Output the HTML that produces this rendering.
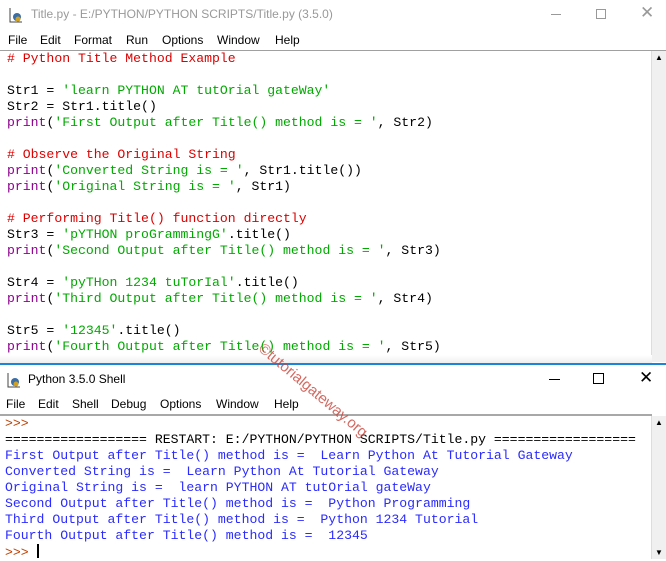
<!DOCTYPE html>
<html><head><meta charset="utf-8"><style>
*{margin:0;padding:0;box-sizing:border-box}
body{width:666px;height:559px;overflow:hidden;background:#fff;font-family:"Liberation Sans",sans-serif;position:relative}
.bar{position:absolute;left:0;width:666px;background:#fff}
.title{font-size:12px;color:#999;}
.menu{font-size:12px;color:#000}
.menu span{position:absolute;top:3px}
pre{font-family:"Liberation Mono",monospace;font-size:13.15px;line-height:16px;position:absolute;left:7px}
.c{color:#dd0000}.s{color:#00aa00}.k{color:#900090}.o{color:#2b2bff}.p{color:#c04000}
.sb{position:absolute;right:0;width:15px;background:#f0f0f0;border-left:1px solid #ddd}
.wm{position:absolute;left:266px;top:340px;transform:rotate(40deg);transform-origin:left top;color:#c8443a;font-size:15px;opacity:.8;white-space:nowrap}
</style></head><body>
<div class="bar title" style="top:0;height:30px">
<svg style="position:absolute;left:8px;top:6px" width="16" height="18"><path d="M2 2v14h12" stroke="#444" fill="none"/><circle cx="9" cy="11" r="4" fill="#3a6ea5"/><circle cx="10" cy="13" r="2.5" fill="#d0a020"/></svg>
<span style="position:absolute;left:31px;top:7px">Title.py - E:/PYTHON/PYTHON SCRIPTS/Title.py (3.5.0)</span>
<div style="position:absolute;left:551px;top:14px;width:10px;height:1px;background:#999"></div>
<div style="position:absolute;left:596px;top:9px;width:10px;height:10px;border:1px solid #999"></div>
<span style="position:absolute;left:640px;top:3px;font-size:17px;color:#999">✕</span>
</div>
<div class="bar menu" style="top:30px;height:20px">
<span style="left:8px">File</span><span style="left:40px">Edit</span><span style="left:74px">Format</span><span style="left:126px">Run</span><span style="left:162px">Options</span><span style="left:217px">Window</span><span style="left:275px">Help</span>
</div>
<div style="position:absolute;left:0;top:50px;width:666px;height:1px;background:#a0a0a0"></div>
<pre style="top:51px">
<span class="c"># Python Title Method Example</span>

Str1 = <span class="s">'learn PYTHON AT tutOrial gateWay'</span>
Str2 = Str1.title()
<span class="k">print</span>(<span class="s">'First Output after Title() method is = '</span>, Str2)

<span class="c"># Observe the Original String</span>
<span class="k">print</span>(<span class="s">'Converted String is = '</span>, Str1.title())
<span class="k">print</span>(<span class="s">'Original String is = '</span>, Str1)

<span class="c"># Performing Title() function directly</span>
Str3 = <span class="s">'pYTHON proGrammingG'</span>.title()
<span class="k">print</span>(<span class="s">'Second Output after Title() method is = '</span>, Str3)

Str4 = <span class="s">'pyTHon 1234 tuTorIal'</span>.title()
<span class="k">print</span>(<span class="s">'Third Output after Title() method is = '</span>, Str4)

Str5 = <span class="s">'12345'</span>.title()
<span class="k">print</span>(<span class="s">'Fourth Output after Title() method is = '</span>, Str5)
</pre>
<div class="sb" style="top:51px;height:311px"><span style="position:absolute;left:3px;top:2px;font-size:8px">▲</span></div>
<div style="position:absolute;left:0;top:355px;width:652px;height:8px;background:linear-gradient(#fff,#eee)"></div>
<div style="position:absolute;left:0;top:363px;width:666px;height:2px;background:#1a84d8"></div>
<div class="bar" style="top:365px;height:29px;font-size:12px;color:#000">
<svg style="position:absolute;left:6px;top:6px" width="16" height="18"><path d="M2 2v14h12" stroke="#444" fill="none"/><circle cx="9" cy="11" r="4" fill="#3a6ea5"/><circle cx="10" cy="13" r="2.5" fill="#d0a020"/></svg>
<span style="position:absolute;left:28px;top:7px">Python 3.5.0 Shell</span>
<div style="position:absolute;left:549px;top:14px;width:11px;height:1px;background:#000"></div>
<div style="position:absolute;left:593px;top:8px;width:11px;height:11px;border:1px solid #000"></div>
<span style="position:absolute;left:639px;top:3px;font-size:17px">✕</span>
</div>
<div class="bar menu" style="top:394px;height:20px">
<span style="left:6px">File</span><span style="left:38px">Edit</span><span style="left:72px">Shell</span><span style="left:111px">Debug</span><span style="left:160px">Options</span><span style="left:216px">Window</span><span style="left:274px">Help</span>
</div>
<div style="position:absolute;left:0;top:414px;width:652px;height:2px;background:#a8a8a8"></div>
<pre style="top:416px;left:5px"><span class="p">&gt;&gt;&gt;</span>
================== RESTART: E:/PYTHON/PYTHON SCRIPTS/Title.py ==================
<span class="o">First Output after Title() method is =  Learn Python At Tutorial Gateway
Converted String is =  Learn Python At Tutorial Gateway
Original String is =  learn PYTHON AT tutOrial gateWay
Second Output after Title() method is =  Python Programming
Third Output after Title() method is =  Python 1234 Tutorial
Fourth Output after Title() method is =  12345</span>
<span class="p">&gt;&gt;&gt;</span> <span style="display:inline-block;width:2px;height:14px;background:#000;vertical-align:-2px"></span></pre>
<div class="sb" style="top:416px;height:143px"><span style="position:absolute;left:3px;top:2px;font-size:8px">▲</span><span style="position:absolute;left:3px;bottom:2px;font-size:8px">▼</span></div>
<div class="wm">©tutorialgateway.org</div>
</body></html>
